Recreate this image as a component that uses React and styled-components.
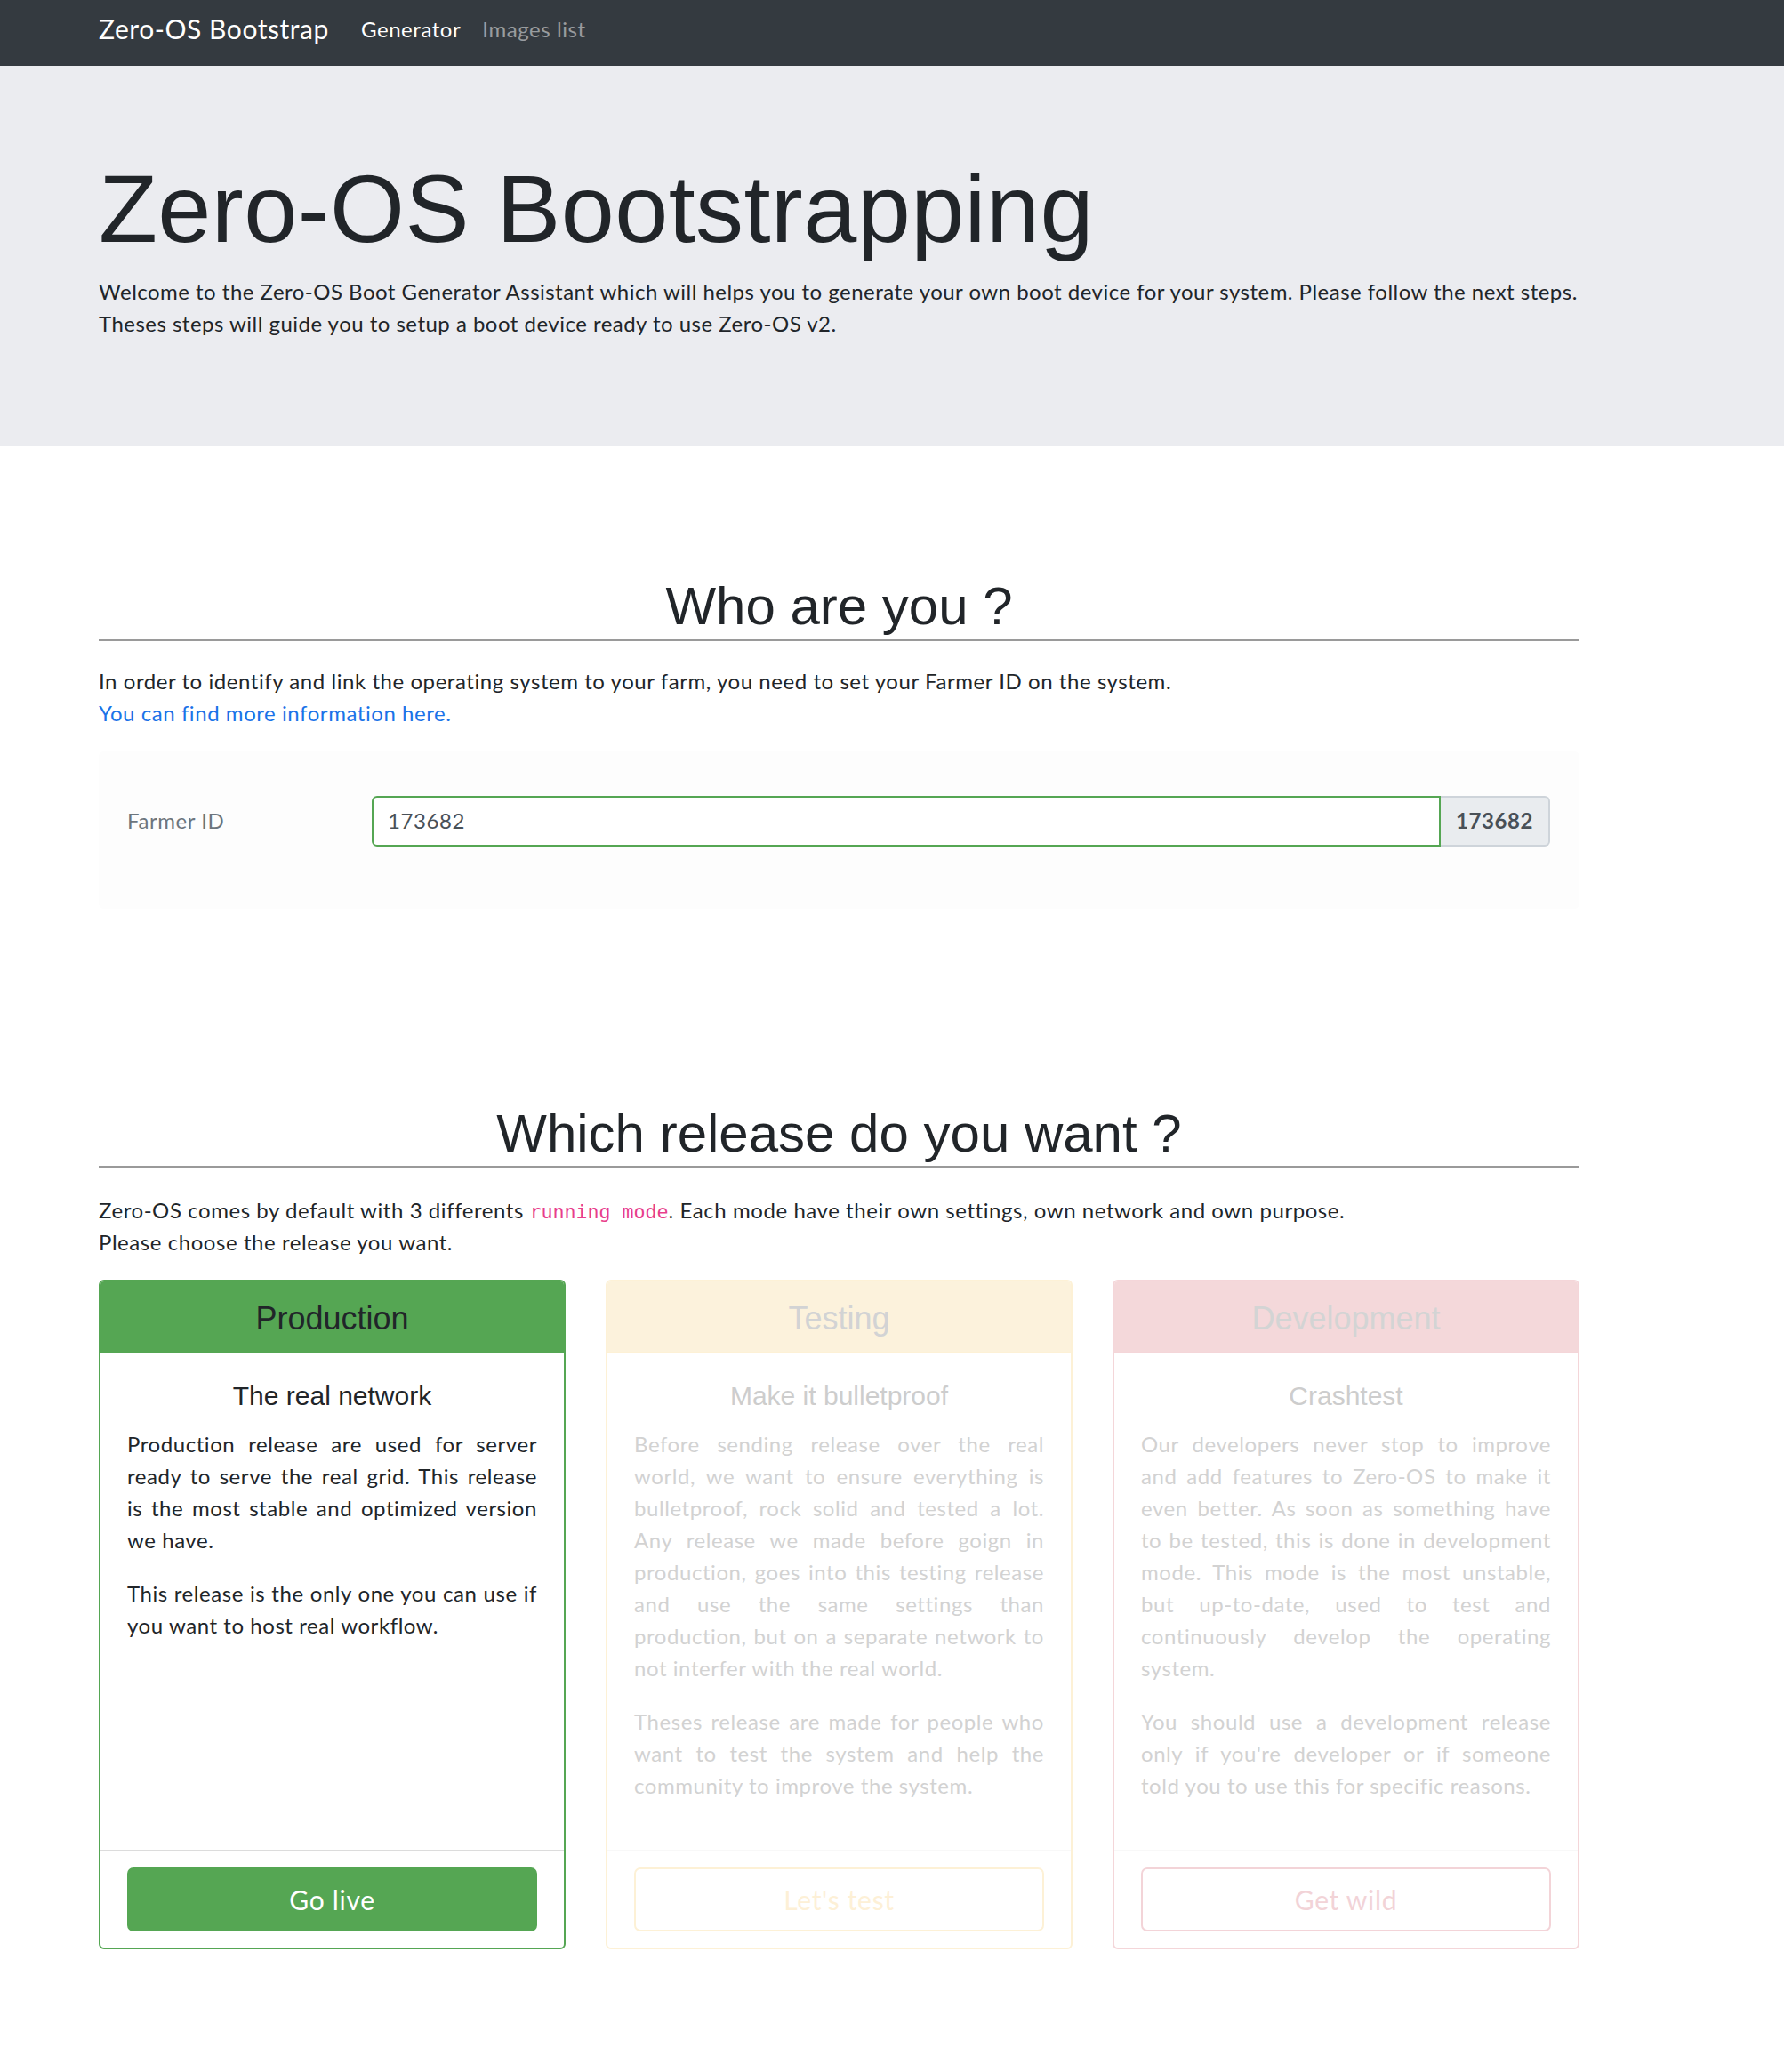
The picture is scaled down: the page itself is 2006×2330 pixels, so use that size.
import React from "react";
import styled, { createGlobalStyle } from "styled-components";

const GlobalStyle = createGlobalStyle`
  html, body { margin: 0; padding: 0; background: #ffffff; }
  body {
    font-family: Lato, "Noto Sans", sans-serif;
    font-size: 24px;
    line-height: 1.5;
    letter-spacing: 0.56px;
    color: #212529;
  }
  * { box-sizing: border-box; }
`;

const Navbar = styled.nav`
  height: 74px;
  background: #343a40;
  display: flex;
  align-items: center;
  padding-left: 111px;
  padding-bottom: 9px;
`;

const Brand = styled.a`
  font-size: 30px;
  color: #ffffff;
  margin-right: 24px;
  text-decoration: none;
`;

const NavLink = styled.a`
  font-size: 24px;
  padding: 0 12px;
  color: ${(p) => (p.$active ? "#ffffff" : "rgba(255,255,255,0.5)")};
  text-decoration: none;
`;

const Jumbotron = styled.header`
  background: #ebecf0;
  padding: 96px 0 96px;
`;

const Container = styled.div`
  width: 1665px;
  margin-left: 111px;
`;

const Display = styled.h1`
  font-family: "Liberation Sans", Arial, sans-serif;
  font-size: 108px;
  font-weight: 300;
  line-height: 1.2;
  letter-spacing: 0.4px;
  margin: 0 0 10px;
  color: #212529;
`;

const Para = styled.p`
  margin: 0 0 ${(p) => p.$mb ?? 24}px;
`;

const Lead = styled(Para)`
  letter-spacing: 0.48px;
`;

const SectionTitle = styled.h1`
  font-family: "Liberation Sans", Arial, sans-serif;
  font-size: 60px;
  font-weight: 400;
  line-height: 1.2;
  letter-spacing: normal;
  text-align: center;
  margin: ${(p) => p.$mt}px 0 ${(p) => p.$mb}px;
  padding-bottom: ${(p) => p.$pb}px;
  border-bottom: 2px solid #9a9a9a;
  color: #212529;
`;

const Link = styled.a`
  color: #1a73e8;
  text-decoration: none;
`;

const Code = styled.code`
  font-family: "DejaVu Sans Mono", "Liberation Mono", monospace;
  font-size: 21.6px;
  letter-spacing: normal;
  color: #e83e8c;
`;

const FormPanel = styled.div`
  background: #fdfdfd;
  border-radius: 6px;
  padding: 50px 33px 70px 32px;
  display: grid;
  grid-template-columns: 275px 1fr;
  align-items: center;
`;

const Label = styled.label`
  color: #6c757d;
`;

const InputGroup = styled.div`
  display: flex;
  height: 57px;
`;

const Input = styled.div`
  flex: 1;
  border: 2px solid #55a653;
  border-radius: 6px 0 0 6px;
  padding: 0 16px;
  display: flex;
  align-items: center;
  color: #495057;
  background: #ffffff;
`;

const Addon = styled.div`
  width: 123px;
  background: #e9ecef;
  border: 2px solid #ced4da;
  border-left: none;
  border-radius: 0 6px 6px 0;
  display: flex;
  align-items: center;
  justify-content: center;
  font-weight: 700;
  color: #495057;
`;

const CardDeck = styled.div`
  display: grid;
  grid-template-columns: repeat(3, 1fr);
  gap: 45px;
  margin-top: 24px;
  margin-bottom: 135px;
`;

const variants = {
  production: {
    border: "#55a653",
    headBg: "#55a653",
    headText: "#212529",
    title: "#212529",
    text: "#212529",
    footLine: "#dcdcdc",
    btnBg: "#55a653",
    btnBorder: "#55a653",
    btnText: "#ffffff",
  },
  testing: {
    border: "#fdf1d6",
    headBg: "#fcf2dc",
    headText: "#d2d3d4",
    title: "#cdcdcd",
    text: "#d2d2d2",
    footLine: "#f8f8f8",
    btnBg: "#ffffff",
    btnBorder: "#fdf1d6",
    btnText: "#fdf0d6",
  },
  development: {
    border: "#f4d6d9",
    headBg: "#f4d8da",
    headText: "#d3d4d4",
    title: "#cdcdcd",
    text: "#d2d2d2",
    footLine: "#f8f8f8",
    btnBg: "#ffffff",
    btnBorder: "#f3d4d8",
    btnText: "#f2d3d7",
  },
};

const Card = styled.div`
  display: flex;
  flex-direction: column;
  border: 2px solid ${(p) => variants[p.$v].border};
  border-radius: 6px;
  overflow: hidden;
  background: #ffffff;
`;

const CardHeader = styled.div`
  background: ${(p) => variants[p.$v].headBg};
  border-bottom: 2px solid ${(p) => variants[p.$v].border};
  padding: 20px 30px 16px;
`;

const CardHeading = styled.h4`
  font-family: "Liberation Sans", Arial, sans-serif;
  font-size: 36px;
  font-weight: 400;
  line-height: 1.2;
  letter-spacing: normal;
  text-align: center;
  margin: 0;
  color: ${(p) => variants[p.$v].headText};
`;

const CardBody = styled.div`
  flex: 1;
  padding: 30px 30px 30px;
  color: ${(p) => variants[p.$v].text};
`;

const CardTitle = styled.h5`
  font-family: "Liberation Sans", Arial, sans-serif;
  font-size: 30px;
  font-weight: 400;
  line-height: 1.2;
  letter-spacing: normal;
  text-align: center;
  margin: 0 0 18px;
  color: ${(p) => variants[p.$v].title};
`;

const CardText = styled.p`
  margin: 0 0 24px;
  text-align: justify;
`;

const CardFooter = styled.div`
  border-top: 2px solid ${(p) => variants[p.$v].footLine};
  padding: 18px 30px;
`;

const Button = styled.button`
  width: 100%;
  height: 72px;
  font-family: Lato, "Noto Sans", sans-serif;
  font-size: 30px;
  letter-spacing: 0.7px;
  border-radius: 7px;
  border: 2px solid ${(p) => variants[p.$v].btnBorder};
  background: ${(p) => variants[p.$v].btnBg};
  color: ${(p) => variants[p.$v].btnText};
  cursor: pointer;
`;

const releases = [
  {
    v: "production",
    name: "Production",
    title: "The real network",
    texts: [
      "Production release are used for server ready to serve the real grid. This release is the most stable and optimized version we have.",
      "This release is the only one you can use if you want to host real workflow.",
    ],
    btn: "Go live",
  },
  {
    v: "testing",
    name: "Testing",
    title: "Make it bulletproof",
    texts: [
      "Before sending release over the real world, we want to ensure everything is bulletproof, rock solid and tested a lot. Any release we made before goign in production, goes into this testing release and use the same settings than production, but on a separate network to not interfer with the real world.",
      "Theses release are made for people who want to test the system and help the community to improve the system.",
    ],
    btn: "Let's test",
  },
  {
    v: "development",
    name: "Development",
    title: "Crashtest",
    texts: [
      "Our developers never stop to improve and add features to Zero-OS to make it even better. As soon as something have to be tested, this is done in development mode. This mode is the most unstable, but up-to-date, used to test and continuously develop the operating system.",
      "You should use a development release only if you're developer or if someone told you to use this for specific reasons.",
    ],
    btn: "Get wild",
  },
];

export default function App() {
  return (
    <>
      <GlobalStyle />
      <Navbar>
        <Brand href="#">Zero-OS Bootstrap</Brand>
        <NavLink $active href="#">Generator</NavLink>
        <NavLink href="#">Images list</NavLink>
      </Navbar>
      <Jumbotron>
        <Container>
          <Display>Zero-OS Bootstrapping</Display>
          <Lead>
            Welcome to the Zero-OS Boot Generator Assistant which will helps you to generate your own boot device for your system. Please follow the next steps. Theses steps will guide you to setup a boot device ready to use Zero-OS v2.
          </Lead>
        </Container>
      </Jumbotron>
      <Container>
        <SectionTitle $mt={144} $pb={1} $mb={27}>Who are you ?</SectionTitle>
        <Para $mb={25}>
          In order to identify and link the operating system to your farm, you need to set your Farmer ID on the system.
          <br />
          <Link href="#">You can find more information here.</Link>
        </Para>
        <FormPanel>
          <Label>Farmer ID</Label>
          <InputGroup>
            <Input>173682</Input>
            <Addon>173682</Addon>
          </InputGroup>
        </FormPanel>
        <SectionTitle $mt={217} $pb={0} $mb={30}>Which release do you want ?</SectionTitle>
        <Para $mb={0}>
          Zero-OS comes by default with 3 differents <Code>running mode</Code>. Each mode have their own settings, own network and own purpose.
          <br />
          Please choose the release you want.
        </Para>
        <CardDeck>
          {releases.map((r) => (
            <Card key={r.v} $v={r.v}>
              <CardHeader $v={r.v}>
                <CardHeading $v={r.v}>{r.name}</CardHeading>
              </CardHeader>
              <CardBody $v={r.v}>
                <CardTitle $v={r.v}>{r.title}</CardTitle>
                {r.texts.map((t, i) => (
                  <CardText key={i}>{t}</CardText>
                ))}
              </CardBody>
              <CardFooter $v={r.v}>
                <Button $v={r.v}>{r.btn}</Button>
              </CardFooter>
            </Card>
          ))}
        </CardDeck>
      </Container>
    </>
  );
}
